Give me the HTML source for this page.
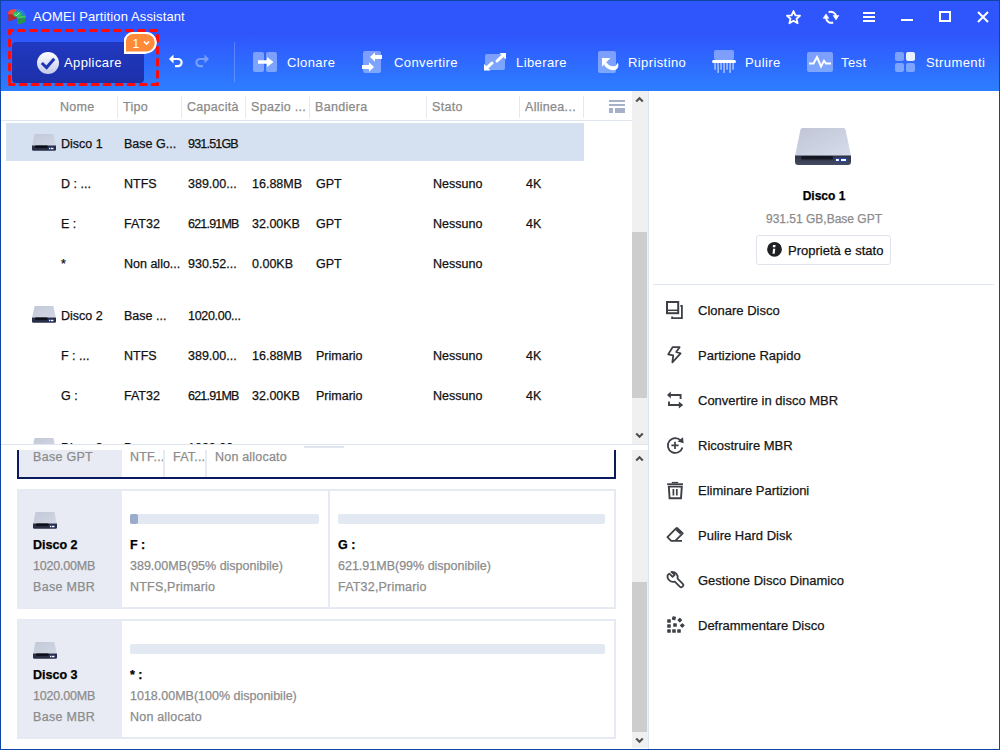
<!DOCTYPE html>
<html><head><meta charset="utf-8">
<style>
*{box-sizing:border-box;margin:0;padding:0}
html,body{width:1000px;height:750px;overflow:hidden;background:#fff;font-family:"Liberation Sans",sans-serif;color:#111;position:relative}
.a{position:absolute}
svg.a{overflow:visible}
.t{position:absolute;white-space:nowrap;line-height:1;-webkit-text-stroke-width:0.25px}
</style></head><body>
<div class="a" style="left:0px;top:0px;width:1000px;height:33px;background:#2f55fd"></div>
<div class="a" style="left:0px;top:33px;width:1000px;height:58px;background:linear-gradient(#2f55fd,#2d7eff)"></div>
<svg class="a" style="left:0px;top:0px;" width="30" height="30" viewBox="0 0 30 30">
<path d="M8.2 11.5 L16.2 9.2 L16.6 18.6 L8.4 21.4 Z" fill="#b72a28"/>
<path d="M8.2 12.5 Q8.6 9.4 16.2 9 L16.4 14.6 L8.2 14.2 Z" fill="#ef4a3e"/>
<path d="M16.2 9 Q24.6 9.2 25.6 15 L17 15.4 Z" fill="#2d7fe4"/>
<path d="M17.2 16 L25.7 15.4 L25.6 21.6 Q22.5 24.2 17.4 24.2 Z" fill="#28954a"/>
<path d="M17.2 16 L25.7 15.4 L25.7 17.6 L17.2 18.4 Z" fill="#43c070"/>
<ellipse cx="17.2" cy="14.3" rx="4.3" ry="2.7" fill="#22c35a"/>
<path d="M15.2 14.6 L16.6 15.6 L19.4 12.8" stroke="#e8ffe8" stroke-width="1" fill="none"/>
</svg>
<div class="t" style="left:33px;top:10.00px;font-size:13px;color:#fff;font-weight:400;letter-spacing:0.12px;-webkit-text-stroke-width:0">AOMEI Partition Assistant</div>
<svg class="a" style="left:785px;top:9px;" width="17" height="16" viewBox="0 0 17 16"><path d="M8.5 2 L10.4 6.3 L15 6.7 L11.5 9.7 L12.6 14.2 L8.5 11.8 L4.4 14.2 L5.5 9.7 L2 6.7 L6.6 6.3 Z" fill="none" stroke="#fff" stroke-width="1.8" stroke-linejoin="round"/></svg>
<svg class="a" style="left:822px;top:9px;" width="18" height="16" viewBox="0 0 18 16"><path d="M6.6 3.3 A5.4 5.4 0 0 1 14.1 7" fill="none" stroke="#fff" stroke-width="2"/><path d="M11.2 6.5 H16.8 L14 10.9 Z" fill="#fff" stroke="#fff" stroke-width="0.6" stroke-linejoin="round"/><path d="M11.2 13.5 A5.4 5.4 0 0 1 4 9.2" fill="none" stroke="#fff" stroke-width="2"/><path d="M1.2 9.3 H6.8 L4 4.9 Z" fill="#fff" stroke="#fff" stroke-width="0.6" stroke-linejoin="round"/></svg>
<div class="a" style="left:863px;top:12px;width:12px;height:2px;background:#fff"></div>
<div class="a" style="left:863px;top:16px;width:12px;height:2px;background:#fff"></div>
<div class="a" style="left:863px;top:20px;width:12px;height:2px;background:#fff"></div>
<div class="a" style="left:901px;top:19px;width:12px;height:2px;background:#fff"></div>
<div class="a" style="left:939px;top:11px;width:12px;height:11px;border:2px solid #fff"></div>
<svg class="a" style="left:977px;top:11px;" width="12" height="12" viewBox="0 0 12 12"><path d="M1 1 L11 11 M11 1 L1 11" stroke="#fff" stroke-width="2"/></svg>
<svg class="a" style="left:0px;top:0px;" width="170" height="95" viewBox="0 0 170 95"><g stroke="#ff0a0a" stroke-width="3" stroke-dasharray="6 6" stroke-linecap="round" fill="none"><path d="M9.5 30.5 H157.5" stroke-dashoffset="3"/><path d="M157.5 30.5 V84.5" stroke-dashoffset="7.2"/><path d="M9.5 84.5 H157.5" stroke-dashoffset="1.4"/><path d="M9.5 30.5 V84.5" stroke-dashoffset="2.6"/></g></svg>
<div class="a" style="left:12px;top:42px;width:132px;height:41px;background:linear-gradient(#2139c1,#1c30a9);border-radius:4px"></div>
<svg class="a" style="left:36px;top:51px;" width="24" height="24" viewBox="0 0 24 24"><defs><linearGradient id="cg" x1="0" y1="0" x2="0" y2="1"><stop offset="0" stop-color="#ffffff"/><stop offset="1" stop-color="#c2c9ea"/></linearGradient></defs><circle cx="12" cy="12" r="11" fill="url(#cg)"/><path d="M5.8 12 L10.6 16.6 L18.2 7.8" fill="none" stroke="#1e34b8" stroke-width="3" stroke-linejoin="miter"/></svg>
<div class="t" style="left:64px;top:56.00px;font-size:13px;color:#fff;font-weight:400;letter-spacing:0.4px;-webkit-text-stroke-width:0">Applicare</div>
<svg class="a" style="left:122px;top:30px;" width="36" height="26" viewBox="0 0 36 26"><path d="M3 23 V11 A8 8 0 0 1 11 3 H24 A9.5 9.5 0 0 1 24 22 Q24 23 23 23 Z" fill="#ff8a3a" stroke="#fff" stroke-width="2"/><path d="M3 23 V11 A8 8 0 0 1 11 3 H24 A9.75 9.75 0 0 1 24 22.5 L3 22.5 Z" fill="#ff8a3a" stroke="#fff" stroke-width="2"/><text x="10.5" y="18" font-family="Liberation Sans" font-size="12" fill="#fff">1</text><path d="M22 11.5 L24.5 14 L27 11.5" stroke="#fff" stroke-width="1.6" fill="none"/></svg>
<svg class="a" style="left:166px;top:52px;" width="20" height="18" viewBox="0 0 20 18"><path d="M3 7 L7.5 2.5 L7.5 11.5 Z" fill="#fff"/><path d="M7 7 H12 A3.6 3.6 0 0 1 12 14.2 H9" fill="none" stroke="#fff" stroke-width="2.2"/></svg>
<svg class="a" style="left:192px;top:52px;opacity:.35" width="20" height="18" viewBox="0 0 20 18"><path d="M17 7 L12.5 2.5 L12.5 11.5 Z" fill="#fff"/><path d="M13 7 H8 A3.6 3.6 0 0 0 8 14.2 H11" fill="none" stroke="#fff" stroke-width="2.2"/></svg>
<div class="a" style="left:234px;top:42px;width:1px;height:40px;background:rgba(255,255,255,.22)"></div>
<svg class="a" style="left:252px;top:51px;" width="26" height="22" viewBox="0 0 26 22"><rect x="1" y="1" width="11" height="20" rx="2" fill="rgba(255,255,255,.38)"/><rect x="14" y="1" width="11" height="20" rx="2" fill="rgba(255,255,255,.38)"/><path d="M6 9.2 H15 V6 L21.5 11 L15 16 V12.8 H6 Z" fill="#fff"/></svg>
<div class="t" style="left:287px;top:56.00px;font-size:13px;color:#fff;font-weight:400;letter-spacing:0.4px;-webkit-text-stroke-width:0">Clonare</div>
<svg class="a" style="left:361px;top:50px;" width="22" height="24" viewBox="0 0 22 24"><rect x="2" y="1" width="18" height="22" rx="2" fill="rgba(255,255,255,.38)"/><path d="M21 5 H14 V2.2 L9 7 L14 11.8 V9 H21 Z" fill="#fff"/><path d="M1 15 H8 V12.2 L13 17 L8 21.8 V19 H1 Z" fill="#fff"/></svg>
<div class="t" style="left:394px;top:56.00px;font-size:13px;color:#fff;font-weight:400;letter-spacing:0.4px;-webkit-text-stroke-width:0">Convertire</div>
<svg class="a" style="left:483px;top:52px;" width="24" height="20" viewBox="0 0 24 20"><rect x="2" y="2" width="20" height="16" rx="2" fill="rgba(255,255,255,.38)"/><path d="M16.5 1 H23 V7.5 Z" fill="#fff"/><path d="M14 9 L19.5 3.8" stroke="#fff" stroke-width="3" stroke-linecap="round"/><path d="M1 12 V18.6 H7.5 Z" fill="#fff"/><path d="M3.8 15.8 L9 11" stroke="#fff" stroke-width="3" stroke-linecap="round"/></svg>
<div class="t" style="left:516px;top:56.00px;font-size:13px;color:#fff;font-weight:400;letter-spacing:0.4px;-webkit-text-stroke-width:0">Liberare</div>
<svg class="a" style="left:597px;top:50px;" width="24" height="24" viewBox="0 0 24 24"><rect x="1" y="1" width="18" height="22" rx="2" fill="rgba(255,255,255,.38)"/><path d="M5 8 H13.5 L5 16.5 Z" fill="#fff"/><path d="M9 12 C11.5 15.5 14.5 17 18.5 16 L20.8 12.8 C22 15 21.5 18 19.5 19.2 C15 21.5 10.5 19.5 7 15 Z" fill="#fff"/></svg>
<div class="t" style="left:628px;top:56.00px;font-size:13px;color:#fff;font-weight:400;letter-spacing:0.4px;-webkit-text-stroke-width:0">Ripristino</div>
<svg class="a" style="left:711px;top:49px;" width="26" height="25" viewBox="0 0 26 25"><rect x="3" y="1" width="20" height="10" rx="2" fill="rgba(255,255,255,.38)"/><rect x="1" y="11" width="24" height="3" rx="1.5" fill="#fff"/><rect x="3.2" y="14" width="1.8" height="6.7" fill="rgba(255,255,255,.5)"/><rect x="6.2" y="14" width="1.8" height="9.9" fill="rgba(255,255,255,.5)"/><rect x="9.2" y="14" width="1.8" height="6.7" fill="rgba(255,255,255,.5)"/><rect x="12.2" y="14" width="1.8" height="9.9" fill="rgba(255,255,255,.5)"/><rect x="15.2" y="14" width="1.8" height="6.7" fill="rgba(255,255,255,.5)"/><rect x="18.2" y="14" width="1.8" height="9.9" fill="rgba(255,255,255,.5)"/><rect x="21.2" y="14" width="1.8" height="6.7" fill="rgba(255,255,255,.5)"/></svg>
<div class="t" style="left:745px;top:56.00px;font-size:13px;color:#fff;font-weight:400;letter-spacing:0.4px;-webkit-text-stroke-width:0">Pulire</div>
<svg class="a" style="left:806px;top:51px;" width="28" height="22" viewBox="0 0 28 22"><rect x="1" y="1" width="26" height="20" rx="2" fill="rgba(255,255,255,.38)"/><path d="M3 12.4 H7.5 L11 6 L15 15.5 L18 9.8 L20 12.4 H25" fill="none" stroke="#fff" stroke-width="2"/></svg>
<div class="t" style="left:841px;top:56.00px;font-size:13px;color:#fff;font-weight:400;letter-spacing:0.4px;-webkit-text-stroke-width:0">Test</div>
<svg class="a" style="left:894px;top:51px;" width="22" height="22" viewBox="0 0 22 22"><rect x="1" y="1" width="9" height="9" rx="2" fill="rgba(255,255,255,.38)"/><rect x="12" y="1" width="9" height="9" rx="2" fill="#e8effd"/><rect x="1" y="12" width="9" height="9" rx="2" fill="rgba(255,255,255,.38)"/><rect x="12" y="12" width="9" height="9" rx="2" fill="rgba(255,255,255,.38)"/></svg>
<div class="t" style="left:926px;top:56.00px;font-size:13px;color:#fff;font-weight:400;letter-spacing:0.4px;-webkit-text-stroke-width:0">Strumenti</div>
<div class="a" style="left:0px;top:91px;width:632px;height:353px;background:#fff"></div>
<div class="t" style="left:60px;top:101.42px;font-size:12.5px;color:#8a8a8a;font-weight:400;letter-spacing:0.3px">Nome</div>
<div class="t" style="left:123px;top:101.42px;font-size:12.5px;color:#8a8a8a;font-weight:400;letter-spacing:0.3px">Tipo</div>
<div class="t" style="left:187px;top:101.42px;font-size:12.5px;color:#8a8a8a;font-weight:400;letter-spacing:0.3px">Capacità</div>
<div class="t" style="left:251px;top:101.42px;font-size:12.5px;color:#8a8a8a;font-weight:400;letter-spacing:0.3px">Spazio ...</div>
<div class="t" style="left:315px;top:101.42px;font-size:12.5px;color:#8a8a8a;font-weight:400;letter-spacing:0.3px">Bandiera</div>
<div class="t" style="left:432px;top:101.42px;font-size:12.5px;color:#8a8a8a;font-weight:400;letter-spacing:0.3px">Stato</div>
<div class="t" style="left:525px;top:101.42px;font-size:12.5px;color:#8a8a8a;font-weight:400;letter-spacing:0.3px">Allinea...</div>
<div class="a" style="left:117px;top:96px;width:1px;height:22px;background:#e6eaf0"></div>
<div class="a" style="left:181px;top:96px;width:1px;height:22px;background:#e6eaf0"></div>
<div class="a" style="left:245px;top:96px;width:1px;height:22px;background:#e6eaf0"></div>
<div class="a" style="left:309px;top:96px;width:1px;height:22px;background:#e6eaf0"></div>
<div class="a" style="left:426px;top:96px;width:1px;height:22px;background:#e6eaf0"></div>
<div class="a" style="left:519px;top:96px;width:1px;height:22px;background:#e6eaf0"></div>
<div class="a" style="left:583px;top:96px;width:1px;height:22px;background:#e6eaf0"></div>
<div class="a" style="left:0px;top:120px;width:632px;height:1px;background:#dfe5ef"></div>
<div class="a" style="left:609px;top:100px;width:16px;height:2px;background:#a4b1c9"></div>
<div class="a" style="left:609px;top:104px;width:16px;height:2px;background:#a4b1c9"></div>
<div class="a" style="left:609px;top:108px;width:4px;height:5px;background:#a4b1c9"></div>
<div class="a" style="left:615px;top:108px;width:10px;height:5px;background:#a4b1c9"></div>
<div class="a" style="left:6px;top:123px;width:578px;height:38px;background:#d5e0f0"></div>
<svg class="a" style="left:32px;top:134px;" width="24" height="17" viewBox="0 0 24 17"><defs><linearGradient id="sgr0" x1="0" y1="0" x2="1" y2="1"><stop offset="0" stop-color="#c3c8d8"/><stop offset="1" stop-color="#d2d7e5"/></linearGradient></defs>
<path d="M2.4 0.8 A0.8 0.8 0 0 1 3.2 0 H20.8 A0.8 0.8 0 0 1 21.6 0.8 L23.8 11.6 H0.2 Z" fill="url(#sgr0)"/>
<path d="M0 11.4 H24 V15.4 A1.4 1.4 0 0 1 22.6 16.8 H1.4 A1.4 1.4 0 0 1 0 15.4 Z" fill="#2a2f45"/>
<rect x="3" y="11.6" width="12.8" height="2.2" rx="1" fill="#0a0c14"/>
<rect x="16.3" y="13.2" width="5.8" height="2.6" rx="0.6" fill="#22387e"/><rect x="17" y="13.8" width="1.3" height="1.4" fill="#fff"/><rect x="19" y="13.8" width="2.4" height="1.4" fill="#fff"/></svg>
<div class="t" style="left:61px;top:138.42px;font-size:12.5px;color:#111;font-weight:400;letter-spacing:0px">Disco 1</div>
<div class="t" style="left:124px;top:138.42px;font-size:12.5px;color:#111;font-weight:400;letter-spacing:0px">Base G...</div>
<div class="t" style="left:188px;top:138.42px;font-size:12.5px;color:#111;font-weight:400;letter-spacing:-0.8px">931.51GB</div>
<div class="t" style="left:61px;top:178.42px;font-size:12.5px;color:#111;font-weight:400;letter-spacing:0px">D : ...</div>
<div class="t" style="left:124px;top:178.42px;font-size:12.5px;color:#111;font-weight:400;letter-spacing:0px">NTFS</div>
<div class="t" style="left:188px;top:178.42px;font-size:12.5px;color:#111;font-weight:400;letter-spacing:0px">389.00...</div>
<div class="t" style="left:252px;top:178.42px;font-size:12.5px;color:#111;font-weight:400;letter-spacing:0px">16.88MB</div>
<div class="t" style="left:316px;top:178.42px;font-size:12.5px;color:#111;font-weight:400;letter-spacing:0px">GPT</div>
<div class="t" style="left:433px;top:178.42px;font-size:12.5px;color:#111;font-weight:400;letter-spacing:0px">Nessuno</div>
<div class="t" style="left:526px;top:178.42px;font-size:12.5px;color:#111;font-weight:400;letter-spacing:0px">4K</div>
<div class="t" style="left:61px;top:218.42px;font-size:12.5px;color:#111;font-weight:400;letter-spacing:0px">E :</div>
<div class="t" style="left:124px;top:218.42px;font-size:12.5px;color:#111;font-weight:400;letter-spacing:0px">FAT32</div>
<div class="t" style="left:188px;top:218.42px;font-size:12.5px;color:#111;font-weight:400;letter-spacing:-0.8px">621.91MB</div>
<div class="t" style="left:252px;top:218.42px;font-size:12.5px;color:#111;font-weight:400;letter-spacing:0px">32.00KB</div>
<div class="t" style="left:316px;top:218.42px;font-size:12.5px;color:#111;font-weight:400;letter-spacing:0px">GPT</div>
<div class="t" style="left:433px;top:218.42px;font-size:12.5px;color:#111;font-weight:400;letter-spacing:0px">Nessuno</div>
<div class="t" style="left:526px;top:218.42px;font-size:12.5px;color:#111;font-weight:400;letter-spacing:0px">4K</div>
<div class="t" style="left:61px;top:258.42px;font-size:12.5px;color:#111;font-weight:400;letter-spacing:0px">*</div>
<div class="t" style="left:124px;top:258.42px;font-size:12.5px;color:#111;font-weight:400;letter-spacing:0px">Non allo...</div>
<div class="t" style="left:188px;top:258.42px;font-size:12.5px;color:#111;font-weight:400;letter-spacing:0px">930.52...</div>
<div class="t" style="left:252px;top:258.42px;font-size:12.5px;color:#111;font-weight:400;letter-spacing:0px">0.00KB</div>
<div class="t" style="left:316px;top:258.42px;font-size:12.5px;color:#111;font-weight:400;letter-spacing:0px">GPT</div>
<div class="t" style="left:433px;top:258.42px;font-size:12.5px;color:#111;font-weight:400;letter-spacing:0px">Nessuno</div>
<svg class="a" style="left:32px;top:306px;" width="24" height="17" viewBox="0 0 24 17"><defs><linearGradient id="sgr4" x1="0" y1="0" x2="1" y2="1"><stop offset="0" stop-color="#c3c8d8"/><stop offset="1" stop-color="#d2d7e5"/></linearGradient></defs>
<path d="M2.4 0.8 A0.8 0.8 0 0 1 3.2 0 H20.8 A0.8 0.8 0 0 1 21.6 0.8 L23.8 11.6 H0.2 Z" fill="url(#sgr4)"/>
<path d="M0 11.4 H24 V15.4 A1.4 1.4 0 0 1 22.6 16.8 H1.4 A1.4 1.4 0 0 1 0 15.4 Z" fill="#2a2f45"/>
<rect x="3" y="11.6" width="12.8" height="2.2" rx="1" fill="#0a0c14"/>
<rect x="16.3" y="13.2" width="5.8" height="2.6" rx="0.6" fill="#22387e"/><rect x="17" y="13.8" width="1.3" height="1.4" fill="#fff"/><rect x="19" y="13.8" width="2.4" height="1.4" fill="#fff"/></svg>
<div class="t" style="left:61px;top:310.42px;font-size:12.5px;color:#111;font-weight:400;letter-spacing:0px">Disco 2</div>
<div class="t" style="left:124px;top:310.42px;font-size:12.5px;color:#111;font-weight:400;letter-spacing:0px">Base ...</div>
<div class="t" style="left:188px;top:310.42px;font-size:12.5px;color:#111;font-weight:400;letter-spacing:-0.3px">1020.00...</div>
<div class="t" style="left:61px;top:350.42px;font-size:12.5px;color:#111;font-weight:400;letter-spacing:0px">F : ...</div>
<div class="t" style="left:124px;top:350.42px;font-size:12.5px;color:#111;font-weight:400;letter-spacing:0px">NTFS</div>
<div class="t" style="left:188px;top:350.42px;font-size:12.5px;color:#111;font-weight:400;letter-spacing:0px">389.00...</div>
<div class="t" style="left:252px;top:350.42px;font-size:12.5px;color:#111;font-weight:400;letter-spacing:0px">16.88MB</div>
<div class="t" style="left:316px;top:350.42px;font-size:12.5px;color:#111;font-weight:400;letter-spacing:0px">Primario</div>
<div class="t" style="left:433px;top:350.42px;font-size:12.5px;color:#111;font-weight:400;letter-spacing:0px">Nessuno</div>
<div class="t" style="left:526px;top:350.42px;font-size:12.5px;color:#111;font-weight:400;letter-spacing:0px">4K</div>
<div class="t" style="left:61px;top:390.42px;font-size:12.5px;color:#111;font-weight:400;letter-spacing:0px">G :</div>
<div class="t" style="left:124px;top:390.42px;font-size:12.5px;color:#111;font-weight:400;letter-spacing:0px">FAT32</div>
<div class="t" style="left:188px;top:390.42px;font-size:12.5px;color:#111;font-weight:400;letter-spacing:-0.8px">621.91MB</div>
<div class="t" style="left:252px;top:390.42px;font-size:12.5px;color:#111;font-weight:400;letter-spacing:0px">32.00KB</div>
<div class="t" style="left:316px;top:390.42px;font-size:12.5px;color:#111;font-weight:400;letter-spacing:0px">Primario</div>
<div class="t" style="left:433px;top:390.42px;font-size:12.5px;color:#111;font-weight:400;letter-spacing:0px">Nessuno</div>
<div class="t" style="left:526px;top:390.42px;font-size:12.5px;color:#111;font-weight:400;letter-spacing:0px">4K</div>
<div class="a" style="left:0;top:91px;width:632px;height:353px;overflow:hidden">
<svg class="a" style="left:32px;top:347px;" width="24" height="17" viewBox="0 0 24 17"><defs><linearGradient id="sgr7" x1="0" y1="0" x2="1" y2="1"><stop offset="0" stop-color="#c3c8d8"/><stop offset="1" stop-color="#d2d7e5"/></linearGradient></defs>
<path d="M2.4 0.8 A0.8 0.8 0 0 1 3.2 0 H20.8 A0.8 0.8 0 0 1 21.6 0.8 L23.8 11.6 H0.2 Z" fill="url(#sgr7)"/>
<path d="M0 11.4 H24 V15.4 A1.4 1.4 0 0 1 22.6 16.8 H1.4 A1.4 1.4 0 0 1 0 15.4 Z" fill="#2a2f45"/>
<rect x="3" y="11.6" width="12.8" height="2.2" rx="1" fill="#0a0c14"/>
<rect x="16.3" y="13.2" width="5.8" height="2.6" rx="0.6" fill="#22387e"/><rect x="17" y="13.8" width="1.3" height="1.4" fill="#fff"/><rect x="19" y="13.8" width="2.4" height="1.4" fill="#fff"/></svg>
<div class="t" style="left:61px;top:351.42px;font-size:12.5px;color:#111">Disco 3</div>
<div class="t" style="left:124px;top:351.42px;font-size:12.5px;color:#111">Base ...</div>
<div class="t" style="left:188px;top:351.42px;font-size:12.5px;color:#111">1020.00...</div>
</div>
<div class="a" style="left:632px;top:91px;width:16px;height:353px;background:#f0f0f0"></div>
<div class="a" style="left:632px;top:232px;width:15px;height:166px;background:#cdcdcd"></div>
<svg class="a" style="left:635px;top:96px;" width="9" height="7" viewBox="0 0 9 7"><path d="M1.2 5.4 L4.5 2.2 L7.8 5.4" fill="none" stroke="#505050" stroke-width="2.1"/></svg>
<svg class="a" style="left:635px;top:432px;" width="9" height="7" viewBox="0 0 9 7"><path d="M1.2 1.6 L4.5 4.8 L7.8 1.6" fill="none" stroke="#505050" stroke-width="2.1"/></svg>
<div class="a" style="left:0px;top:444px;width:648px;height:1px;background:#dfe5ef"></div>
<div class="a" style="left:304px;top:446px;width:40px;height:2px;background:#dfe5ef"></div>
<div class="a" style="left:0;top:450px;width:632px;height:298px;overflow:hidden">
<div class="a" style="left:17px;top:-91px;width:599px;height:120px;border:2px solid #0a1a5e;background:#fff"></div>
<div class="a" style="left:19px;top:-89px;width:103px;height:116px;background:#e8ebf3"></div>
<svg class="a" style="left:33px;top:-68px" width="24" height="17" viewBox="0 0 24 17"><defs><linearGradient id="sgc1" x1="0" y1="0" x2="1" y2="1"><stop offset="0" stop-color="#c3c8d8"/><stop offset="1" stop-color="#d2d7e5"/></linearGradient></defs>
<path d="M2.4 0.8 A0.8 0.8 0 0 1 3.2 0 H20.8 A0.8 0.8 0 0 1 21.6 0.8 L23.8 11.6 H0.2 Z" fill="url(#sgc1)"/>
<path d="M0 11.4 H24 V15.4 A1.4 1.4 0 0 1 22.6 16.8 H1.4 A1.4 1.4 0 0 1 0 15.4 Z" fill="#2a2f45"/>
<rect x="3" y="11.6" width="12.8" height="2.2" rx="1" fill="#0a0c14"/>
<rect x="16.3" y="13.2" width="5.8" height="2.6" rx="0.6" fill="#22387e"/><rect x="17" y="13.8" width="1.3" height="1.4" fill="#fff"/><rect x="19" y="13.8" width="2.4" height="1.4" fill="#fff"/></svg>
<div class="t" style="left:33px;top:-40.58px;font-size:12.5px;color:#000;font-weight:700;letter-spacing:0px">Disco 1</div>
<div class="t" style="left:33px;top:-19.58px;font-size:12.5px;color:#8c8c8c;font-weight:400;letter-spacing:-0.2px">931.51GB</div>
<div class="t" style="left:33px;top:1.42px;font-size:12.5px;color:#8c8c8c;font-weight:400;letter-spacing:0.3px">Base GPT</div>
<div class="a" style="left:130px;top:-66px;width:24px;height:10px;background:#e3e9f2;border-radius:2px"></div>
<div class="t" style="left:130px;top:-40.58px;font-size:12.5px;color:#000;font-weight:700;letter-spacing:0px">D :</div>
<div class="t" style="left:130px;top:-19.58px;font-size:12.5px;color:#8c8c8c;font-weight:400;letter-spacing:0px">389.00MB</div>
<div class="t" style="left:130px;top:1.42px;font-size:12.5px;color:#8c8c8c;font-weight:400;letter-spacing:0.2px">NTF...</div>
<div class="a" style="left:163px;top:-89px;width:2px;height:116px;background:#e6eaf2"></div>
<div class="a" style="left:173px;top:-66px;width:23px;height:10px;background:#e3e9f2;border-radius:2px"></div>
<div class="t" style="left:173px;top:-40.58px;font-size:12.5px;color:#000;font-weight:700;letter-spacing:0px">E :</div>
<div class="t" style="left:173px;top:-19.58px;font-size:12.5px;color:#8c8c8c;font-weight:400;letter-spacing:0px">621.91MB</div>
<div class="t" style="left:173px;top:1.42px;font-size:12.5px;color:#8c8c8c;font-weight:400;letter-spacing:0.2px">FAT...</div>
<div class="a" style="left:205px;top:-89px;width:2px;height:116px;background:#e6eaf2"></div>
<div class="a" style="left:215px;top:-66px;width:390px;height:10px;background:#e3e9f2;border-radius:2px"></div>
<div class="t" style="left:215px;top:-40.58px;font-size:12.5px;color:#000;font-weight:700;letter-spacing:0px">* :</div>
<div class="t" style="left:215px;top:-19.58px;font-size:12.5px;color:#8c8c8c;font-weight:400;letter-spacing:0px">930.52GB</div>
<div class="t" style="left:215px;top:1.42px;font-size:12.5px;color:#8c8c8c;font-weight:400;letter-spacing:0.2px">Non allocato</div>
<div class="a" style="left:17px;top:39px;width:599px;height:120px;border:2px solid #e6eaf2;background:#fff"></div>
<div class="a" style="left:19px;top:41px;width:103px;height:116px;background:#e8ebf3"></div>
<svg class="a" style="left:33px;top:62px" width="24" height="17" viewBox="0 0 24 17"><defs><linearGradient id="sgc2" x1="0" y1="0" x2="1" y2="1"><stop offset="0" stop-color="#c3c8d8"/><stop offset="1" stop-color="#d2d7e5"/></linearGradient></defs>
<path d="M2.4 0.8 A0.8 0.8 0 0 1 3.2 0 H20.8 A0.8 0.8 0 0 1 21.6 0.8 L23.8 11.6 H0.2 Z" fill="url(#sgc2)"/>
<path d="M0 11.4 H24 V15.4 A1.4 1.4 0 0 1 22.6 16.8 H1.4 A1.4 1.4 0 0 1 0 15.4 Z" fill="#2a2f45"/>
<rect x="3" y="11.6" width="12.8" height="2.2" rx="1" fill="#0a0c14"/>
<rect x="16.3" y="13.2" width="5.8" height="2.6" rx="0.6" fill="#22387e"/><rect x="17" y="13.8" width="1.3" height="1.4" fill="#fff"/><rect x="19" y="13.8" width="2.4" height="1.4" fill="#fff"/></svg>
<div class="t" style="left:33px;top:89.42px;font-size:12.5px;color:#000;font-weight:700;letter-spacing:0px">Disco 2</div>
<div class="t" style="left:33px;top:110.42px;font-size:12.5px;color:#8c8c8c;font-weight:400;letter-spacing:-0.2px">1020.00MB</div>
<div class="t" style="left:33px;top:131.42px;font-size:12.5px;color:#8c8c8c;font-weight:400;letter-spacing:0.3px">Base MBR</div>
<div class="a" style="left:130px;top:64px;width:189px;height:10px;background:#e3e9f2;border-radius:2px"></div>
<div class="a" style="left:130px;top:64px;width:8px;height:10px;background:#9aabcb;border-radius:2px"></div>
<div class="t" style="left:130px;top:89.42px;font-size:12.5px;color:#000;font-weight:700;letter-spacing:0px">F :</div>
<div class="t" style="left:130px;top:110.42px;font-size:12.5px;color:#8c8c8c;font-weight:400;letter-spacing:0px">389.00MB(95% disponibile)</div>
<div class="t" style="left:130px;top:131.42px;font-size:12.5px;color:#8c8c8c;font-weight:400;letter-spacing:0.2px">NTFS,Primario</div>
<div class="a" style="left:328px;top:41px;width:2px;height:116px;background:#e6eaf2"></div>
<div class="a" style="left:338px;top:64px;width:267px;height:10px;background:#e3e9f2;border-radius:2px"></div>
<div class="t" style="left:338px;top:89.42px;font-size:12.5px;color:#000;font-weight:700;letter-spacing:0px">G :</div>
<div class="t" style="left:338px;top:110.42px;font-size:12.5px;color:#8c8c8c;font-weight:400;letter-spacing:0px">621.91MB(99% disponibile)</div>
<div class="t" style="left:338px;top:131.42px;font-size:12.5px;color:#8c8c8c;font-weight:400;letter-spacing:0.2px">FAT32,Primario</div>
<div class="a" style="left:17px;top:169px;width:599px;height:120px;border:2px solid #e6eaf2;background:#fff"></div>
<div class="a" style="left:19px;top:171px;width:103px;height:116px;background:#e8ebf3"></div>
<svg class="a" style="left:33px;top:192px" width="24" height="17" viewBox="0 0 24 17"><defs><linearGradient id="sgc3" x1="0" y1="0" x2="1" y2="1"><stop offset="0" stop-color="#c3c8d8"/><stop offset="1" stop-color="#d2d7e5"/></linearGradient></defs>
<path d="M2.4 0.8 A0.8 0.8 0 0 1 3.2 0 H20.8 A0.8 0.8 0 0 1 21.6 0.8 L23.8 11.6 H0.2 Z" fill="url(#sgc3)"/>
<path d="M0 11.4 H24 V15.4 A1.4 1.4 0 0 1 22.6 16.8 H1.4 A1.4 1.4 0 0 1 0 15.4 Z" fill="#2a2f45"/>
<rect x="3" y="11.6" width="12.8" height="2.2" rx="1" fill="#0a0c14"/>
<rect x="16.3" y="13.2" width="5.8" height="2.6" rx="0.6" fill="#22387e"/><rect x="17" y="13.8" width="1.3" height="1.4" fill="#fff"/><rect x="19" y="13.8" width="2.4" height="1.4" fill="#fff"/></svg>
<div class="t" style="left:33px;top:219.42px;font-size:12.5px;color:#000;font-weight:700;letter-spacing:0px">Disco 3</div>
<div class="t" style="left:33px;top:240.42px;font-size:12.5px;color:#8c8c8c;font-weight:400;letter-spacing:-0.2px">1020.00MB</div>
<div class="t" style="left:33px;top:261.42px;font-size:12.5px;color:#8c8c8c;font-weight:400;letter-spacing:0.3px">Base MBR</div>
<div class="a" style="left:130px;top:194px;width:475px;height:10px;background:#e3e9f2;border-radius:2px"></div>
<div class="t" style="left:130px;top:219.42px;font-size:12.5px;color:#000;font-weight:700;letter-spacing:0px">* :</div>
<div class="t" style="left:130px;top:240.42px;font-size:12.5px;color:#8c8c8c;font-weight:400;letter-spacing:0px">1018.00MB(100% disponibile)</div>
<div class="t" style="left:130px;top:261.42px;font-size:12.5px;color:#8c8c8c;font-weight:400;letter-spacing:0.2px">Non allocato</div>
</div>
<div class="a" style="left:632px;top:450px;width:16px;height:298px;background:#f0f0f0"></div>
<div class="a" style="left:632px;top:582px;width:15px;height:150px;background:#cdcdcd"></div>
<svg class="a" style="left:635px;top:455px;" width="9" height="7" viewBox="0 0 9 7"><path d="M1.2 5.4 L4.5 2.2 L7.8 5.4" fill="none" stroke="#505050" stroke-width="2.1"/></svg>
<svg class="a" style="left:635px;top:737px;" width="9" height="7" viewBox="0 0 9 7"><path d="M1.2 1.6 L4.5 4.8 L7.8 1.6" fill="none" stroke="#505050" stroke-width="2.1"/></svg>
<div class="a" style="left:648px;top:91px;width:1px;height:658px;background:#dde5f0"></div>
<svg class="a" style="left:795px;top:128px;" width="56" height="37" viewBox="0 0 56 37"><svg x="0" y="0" width="56" height="37" viewBox="0 0 56 37" preserveAspectRatio="none">
<defs><linearGradient id="dgbig" x1="0" y1="0" x2="1" y2="1"><stop offset="0" stop-color="#bfc5d6"/><stop offset="1" stop-color="#d6dcea"/></linearGradient>
<linearGradient id="dfbig" x1="0" y1="0" x2="0" y2="1"><stop offset="0" stop-color="#2c3146"/><stop offset="1" stop-color="#454b62"/></linearGradient></defs>
<path d="M7.5 0 H48.5 A2 2 0 0 1 50.5 1.5 L56 28 H0 L5.5 1.5 A2 2 0 0 1 7.5 0 Z" fill="url(#dgbig)"/>
<path d="M0 27.5 H56 V34 A3 3 0 0 1 53 37 H3 A3 3 0 0 1 0 34 Z" fill="url(#dfbig)"/>
<rect x="6" y="28" width="32" height="3.5" rx="1.5" fill="#14171f"/>
<rect x="39.5" y="29.8" width="13" height="4.4" rx="1" fill="#2d4596"/><rect x="41" y="31" width="2.8" height="2" fill="#fff"/><rect x="46" y="31" width="5" height="2" fill="#fff"/>
</svg></svg>
<div class="t" style="left:524px;width:600px;text-align:center;top:190.24px;font-size:12px;color:#000;font-weight:700;">Disco 1</div>
<div class="t" style="left:524px;width:600px;text-align:center;top:213.34px;font-size:12px;color:#8c8c8c;font-weight:400;">931.51 GB,Base GPT</div>
<div class="a" style="left:756px;top:235px;width:135px;height:30px;border:1px solid #dfe4ec;border-radius:3px;background:#fff"></div>
<svg class="a" style="left:766px;top:241px;" width="17" height="17" viewBox="0 0 17 17"><circle cx="8.5" cy="8.3" r="7.4" fill="#202124"/><path d="M7 4 H9.6 L9.3 6.3 H6.7 Z" fill="#fff"/><path d="M7.1 7.8 H9.3 L8.7 12.8 H6.5 Z" fill="#fff"/></svg>
<div class="t" style="left:788px;top:244.00px;font-size:13px;color:#111;font-weight:400;">Proprietà e stato</div>
<div class="a" style="left:653px;top:284px;width:341px;height:1px;background:#dfe5ef"></div>
<svg class="a" style="left:666px;top:301px;" width="18" height="18" viewBox="0 0 18 18"><rect x="1" y="1" width="11.2" height="11.2" fill="none" stroke="#3d4046" stroke-width="2"/><path d="M1 9.3 H12" stroke="#3d4046" stroke-width="1.5"/><path d="M14.4 5 H15.9 V17.1 H6.1 V15.4" fill="none" stroke="#3d4046" stroke-width="1.8"/></svg>
<div class="t" style="left:698px;top:304.00px;font-size:13px;color:#161616;font-weight:400;">Clonare Disco</div>
<svg class="a" style="left:666px;top:346px;" width="18" height="18" viewBox="0 0 18 18"><path d="M6.6 1.2 H13.6 L10.2 6 L14.6 7.4 L6.4 16.4 L7.2 9.4 L2.2 8.4 Z" fill="none" stroke="#3d4046" stroke-width="1.8" stroke-linejoin="round"/></svg>
<div class="t" style="left:698px;top:349.00px;font-size:13px;color:#161616;font-weight:400;">Partizione Rapido</div>
<svg class="a" style="left:666px;top:391px;" width="18" height="18" viewBox="0 0 18 18"><path d="M4.2 4 H14.6 V8" fill="none" stroke="#3d4046" stroke-width="1.9"/><path d="M1 4 L4.8 0.4 V7.6 Z" fill="#3d4046"/><path d="M3 10.5 V14 H13" fill="none" stroke="#3d4046" stroke-width="1.9"/><path d="M17.2 14 L12.8 10.4 V17.6 Z" fill="#3d4046"/></svg>
<div class="t" style="left:698px;top:394.00px;font-size:13px;color:#161616;font-weight:400;">Convertire in disco MBR</div>
<svg class="a" style="left:666px;top:436px;" width="18" height="18" viewBox="0 0 18 18"><path d="M14.8 4.6 A7.4 7.4 0 1 0 16.4 11.4" fill="none" stroke="#3d4046" stroke-width="1.8"/><path d="M11.6 5.6 L17 1.2 L17.6 7.2 Z" fill="#3d4046"/><path d="M9 5.8 V13 M5.4 9.4 H12.6" stroke="#3d4046" stroke-width="1.7"/></svg>
<div class="t" style="left:698px;top:439.00px;font-size:13px;color:#161616;font-weight:400;">Ricostruire MBR</div>
<svg class="a" style="left:666px;top:481px;" width="18" height="18" viewBox="0 0 18 18"><path d="M1.2 3.2 H17" stroke="#3d4046" stroke-width="1.8"/><path d="M5.8 1.6 H12.2" stroke="#3d4046" stroke-width="1.4"/><path d="M2.8 5.6 H15.8 L15 17.2 H3.6 Z" fill="none" stroke="#3d4046" stroke-width="1.9"/><path d="M7.4 8 V14.6 M10.8 8 V14.6" stroke="#3d4046" stroke-width="1.7"/></svg>
<div class="t" style="left:698px;top:484.00px;font-size:13px;color:#161616;font-weight:400;">Eliminare Partizioni</div>
<svg class="a" style="left:666px;top:526px;" width="18" height="18" viewBox="0 0 18 18"><path d="M10.8 1.6 L16.8 7.4 L9.2 14.8 M10.8 1.6 L1.4 11.2 L5.2 14.8 H16" fill="none" stroke="#3d4046" stroke-width="1.8" stroke-linejoin="round"/><path d="M10.4 3.2 L15 7.6" stroke="#3d4046" stroke-width="2.6"/></svg>
<div class="t" style="left:698px;top:529.00px;font-size:13px;color:#161616;font-weight:400;">Pulire Hard Disk</div>
<svg class="a" style="left:666px;top:571px;" width="18" height="18" viewBox="0 0 18 18"><path d="M3.4 2.6 L6.6 5.8 L8.6 3.8 L5.4 0.9 A5.6 5.6 0 0 1 11.6 7.6 L16.6 12.6 A2 2 0 0 1 13.8 15.6 L8.8 10.6 A5.6 5.6 0 0 1 1.6 4.2 Z" fill="none" stroke="#3d4046" stroke-width="1.8" stroke-linejoin="round"/></svg>
<div class="t" style="left:698px;top:574.00px;font-size:13px;color:#161616;font-weight:400;">Gestione Disco Dinamico</div>
<svg class="a" style="left:666px;top:616px;" width="18" height="18" viewBox="0 0 18 18"><rect x="1.2" y="3.2" width="3.6" height="3.6" rx="0.6" fill="#3d4046"/><rect x="1.2" y="8.2" width="3.6" height="3.6" rx="0.6" fill="#3d4046"/><rect x="7.2" y="7.2" width="3.6" height="3.6" rx="0.6" fill="#3d4046"/><rect x="1.2" y="13.2" width="3.6" height="3.6" rx="0.6" fill="#3d4046"/><rect x="6.2" y="13.2" width="3.6" height="3.6" rx="0.6" fill="#3d4046"/><rect x="11.2" y="13.2" width="3.6" height="3.6" rx="0.6" fill="#3d4046"/><rect x="6.1000000000000005" y="0.4999999999999998" width="3.6" height="3.6" rx="0.6" fill="#3d4046" transform="rotate(15 7.9 2.3)"/><rect x="12.0" y="2.3" width="3.6" height="3.6" rx="0.6" fill="#3d4046" transform="rotate(45 13.8 4.1)"/><rect x="14.5" y="7.7" width="3.6" height="3.6" rx="0.6" fill="#3d4046" transform="rotate(45 16.3 9.5)"/></svg>
<div class="t" style="left:698px;top:619.00px;font-size:13px;color:#161616;font-weight:400;">Deframmentare Disco</div>
<div class="a" style="left:0;top:0;width:1000px;height:750px;border:1px solid #0c45a6"></div>
</body></html>
